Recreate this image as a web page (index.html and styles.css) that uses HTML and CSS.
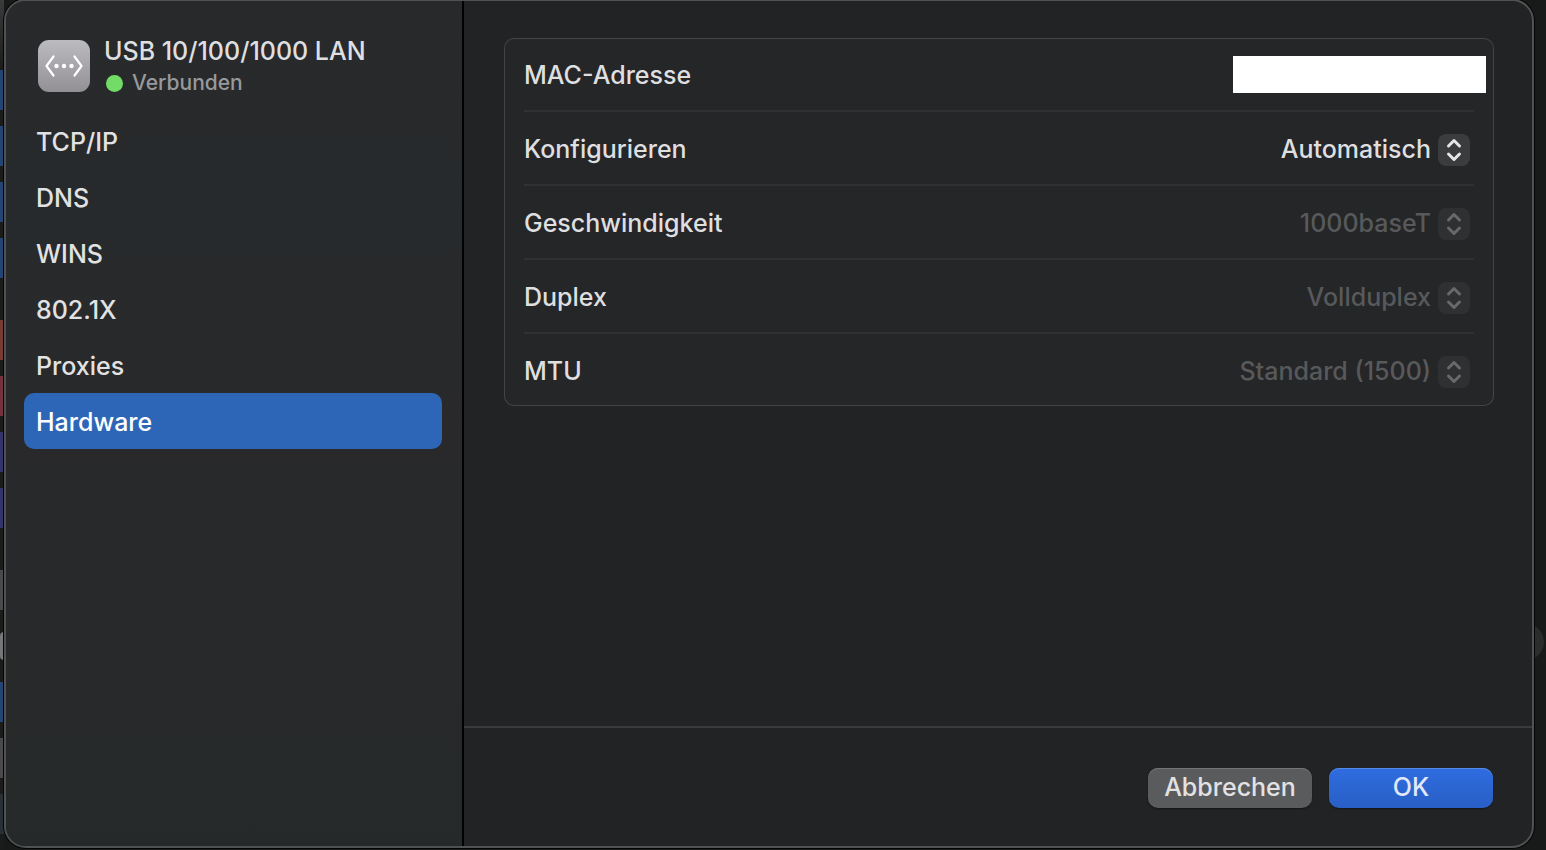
FILE: index.html
```html
<!DOCTYPE html>
<html lang="de">
<head>
    <meta charset="UTF-8">
    <meta name="viewport" content="width=device-width, initial-scale=1">
    <title>USB 10/100/1000 LAN</title>
    <link rel="stylesheet" href="styles.css">
</head>
<body>
    <!-- dimmed window behind the dialog -->
    <div class="backdrop-left">
        <div class="tiles">
            <i class="blue"></i><i class="blue"></i><i class="blue"></i><i class="blue"></i>
        </div>
        <div class="tiles">
            <i class="red"></i><i class="pink"></i><i class="purple"></i><i class="purple"></i>
        </div>
        <div class="tiles">
            <i class="gray"></i><i class="knob"></i><i class="blue"></i><i class="gray"></i><i class="dark"></i>
        </div>
    </div>

    <div class="dialog">
        <aside class="sidebar">
            <header class="service">
                <svg class="service-icon" viewBox="0 0 52 52" aria-hidden="true">
                    <defs>
                        <linearGradient id="tile" x1="0" y1="0" x2="0" y2="1">
                            <stop offset="0" stop-color="#bcbbbf"/>
                            <stop offset="1" stop-color="#929095"/>
                        </linearGradient>
                    </defs>
                    <rect width="52" height="52" rx="11" fill="url(#tile)"/>
                    <path d="M15.5 16.500 8.500 26l7 9.500M36.500 16.500l7 9.500-7 9.500" fill="none" stroke="#fff" stroke-width="2.200" stroke-linecap="round" stroke-linejoin="round"/>
                    <circle cx="18.500" cy="26" r="2.200" fill="#fff"/>
                    <circle cx="26" cy="26" r="2.200" fill="#fff"/>
                    <circle cx="33.500" cy="26" r="2.200" fill="#fff"/>
                </svg>
                <div class="service-text">
                    <h1>USB 10/100/1000 LAN</h1>
                    <p class="status"><span class="dot"></span>Verbunden</p>
                </div>
            </header>
            <nav>
                <a href="#tcpip">TCP/IP</a>
                <a href="#dns">DNS</a>
                <a href="#wins">WINS</a>
                <a href="#8021x">802.1X</a>
                <a href="#proxies">Proxies</a>
                <a href="#hardware" class="active">Hardware</a>
            </nav>
        </aside>

        <form class="panel">
            <main>
                <div class="card">
                    <div class="row">
                        <label for="mac">MAC-Adresse</label>
                        <input type="text" id="mac" class="mac" readonly>
                    </div>
                    <div class="row">
                        <label for="config">Konfigurieren</label>
                        <div class="picker">
                            <select id="config"><option>Automatisch</option></select>
                            <svg viewBox="0 0 32 32" aria-hidden="true"><path d="M10.500 12 16 6.500l5.500 5.500M10.500 20l5.500 5.500 5.500-5.500"/></svg>
                        </div>
                    </div>
                    <div class="row">
                        <label for="speed">Geschwindigkeit</label>
                        <div class="picker">
                            <select id="speed" disabled><option>1000baseT</option></select>
                            <svg viewBox="0 0 32 32" aria-hidden="true"><path d="M10.500 12 16 6.500l5.500 5.500M10.500 20l5.500 5.500 5.500-5.500"/></svg>
                        </div>
                    </div>
                    <div class="row">
                        <label for="duplex">Duplex</label>
                        <div class="picker">
                            <select id="duplex" disabled><option>Vollduplex</option></select>
                            <svg viewBox="0 0 32 32" aria-hidden="true"><path d="M10.500 12 16 6.500l5.500 5.500M10.500 20l5.500 5.500 5.500-5.500"/></svg>
                        </div>
                    </div>
                    <div class="row">
                        <label for="mtu">MTU</label>
                        <div class="picker">
                            <select id="mtu" disabled><option>Standard (1500)</option></select>
                            <svg viewBox="0 0 32 32" aria-hidden="true"><path d="M10.500 12 16 6.500l5.500 5.500M10.500 20l5.500 5.500 5.500-5.500"/></svg>
                        </div>
                    </div>
                </div>
            </main>
            <footer>
                <button type="button">Abbrechen</button>
                <button type="button" class="primary">OK</button>
            </footer>
        </form>
    </div>

    <div class="backdrop-right"><i></i></div>
</body>
</html>
```

FILE: styles.css
```css
* {
    box-sizing: border-box;
}
body {
    margin: 0;
    height: 100vh;
    min-height: 600px;
    overflow: hidden;
    display: grid;
    grid-template-columns: 4px 1fr 12px;
    background: #181919;
    color: #dfdfe0;
    font-family: Inter, 'Liberation Sans', sans-serif;
    font-size: 25px;
    font-weight: 500;
}

/* backdrop */
.backdrop-left {
    display: flex;
    flex-direction: column;
    gap: 42px;
    padding-top: 70px;
    background: linear-gradient(#3c3b3c, #1b1b19 70px);
}
.tiles {
    display: flex;
    flex-direction: column;
    gap: 16px;
}
.tiles i {
    height: 40px;
    background: #444;
}
.tiles .blue { background: #244573; }
.tiles .red { background: #7a3a35; }
.tiles .pink { background: #75313d; }
.tiles .purple { background: #35336b; }
.tiles .gray { background: #4a4a4a; }
.tiles .dark { background: #283035; }
.tiles .knob {
    height: 28px;
    margin: 6px 0;
    background: #777;
    border-radius: 4px 0 0 4px;
}
.backdrop-right {
    display: flex;
    flex-direction: column;
    overflow: hidden;
    padding-top: 624px;
}
.backdrop-right i {
    width: 36px;
    height: 36px;
    margin-left: -26px;
    border-radius: 50%;
    background: #2b2c2c;
}

/* dialog */
.dialog {
    display: grid;
    grid-template-columns: 458px 1fr;
    margin: -1px 0 2px;
    border: 2px solid #505152;
    border-radius: 22px;
    background: #222325;
    box-shadow: 0 0 0 1px #050505;
    overflow: hidden;
    z-index: 1;
}
.sidebar {
    padding: 33px 20px 0 18px;
    border-right: 2px solid #000;
    background: linear-gradient(#28292b, #272a2c 25%, #29292b 50%, #28292a 70%, #262929);
}
.service {
    display: flex;
    align-items: center;
    gap: 14px;
    height: 64px;
    padding-left: 14px;
    margin-bottom: 15px;
}
.service-icon {
    width: 52px;
    height: 52px;
    flex: none;
}
.service-text {
    padding-top: 2px;
}
h1,
.status {
    margin: 0;
    font-size: 25px;
    font-weight: 500;
    line-height: 32px;
    white-space: nowrap;
}
.status {
    display: flex;
    align-items: center;
    gap: 9px;
    font-size: 21px;
    color: #98999b;
}
.dot {
    width: 17px;
    height: 17px;
    margin-left: 2px;
    border-radius: 50%;
    background: #73dc67;
}
nav a {
    display: block;
    height: 56px;
    padding: 1px 12px 0;
    border-radius: 10px;
    line-height: 56px;
    color: #e2e2e3;
    text-decoration: none;
}
nav .active {
    background: #2d66b7;
    color: #fff;
}

.panel {
    display: flex;
    flex-direction: column;
    min-width: 0;
}
main {
    flex: 1;
    padding: 37px 38px 0 40px;
}
.card {
    border-radius: 10px;
    background: #252628;
    box-shadow: inset 0 0 0 1px #434446;
    padding: 0 20px;
}
.row {
    display: flex;
    align-items: center;
    justify-content: space-between;
    height: 74px;
    border-bottom: 2px solid #303133;
}
.row:last-child {
    height: 72px;
    border-bottom: 0;
}
.row label {
    padding-top: 2px;
}
.mac {
    width: 253px;
    height: 37px;
    margin-right: -12px;
    border: 0;
    background: #fff;
}
.picker {
    position: relative;
    margin-right: 4px;
}
.picker select {
    display: block;
    height: 40px;
    padding: 2px 39px 0 0;
    border: 0;
    appearance: none;
    background: transparent;
    color: #dfdfe0;
    font: inherit;
    text-align-last: right;
}
.picker select:disabled {
    color: #58595b;
    opacity: 1;
}
.picker svg {
    position: absolute;
    top: 6px;
    right: 0;
    width: 32px;
    height: 32px;
    border-radius: 8px;
    background: #3b3c3e;
    fill: none;
    stroke: #e6e6e7;
    stroke-width: 3;
    stroke-linecap: round;
    stroke-linejoin: round;
    pointer-events: none;
}
.picker select:disabled + svg {
    background: #2f3032;
    stroke: #68696b;
}

footer {
    display: flex;
    justify-content: flex-end;
    gap: 17px;
    padding: 40px 39px 38px;
    border-top: 2px solid #3a3b3d;
}
button {
    width: 164px;
    height: 40px;
    padding: 0 0 2px;
    border: 0;
    border-radius: 10px;
    background: #5a5b5d;
    box-shadow: inset 0 1px #747577, 0 1px 2px rgba(0,0,0,0.4);
    color: #e2e2e3;
    font: inherit;
}
button.primary {
    background: linear-gradient(#2e6ce0, #295fc5);
    box-shadow: inset 0 1px #5589e6, 0 1px 2px rgba(0,0,0,0.4);
    color: #e0e8fa;
}
```
